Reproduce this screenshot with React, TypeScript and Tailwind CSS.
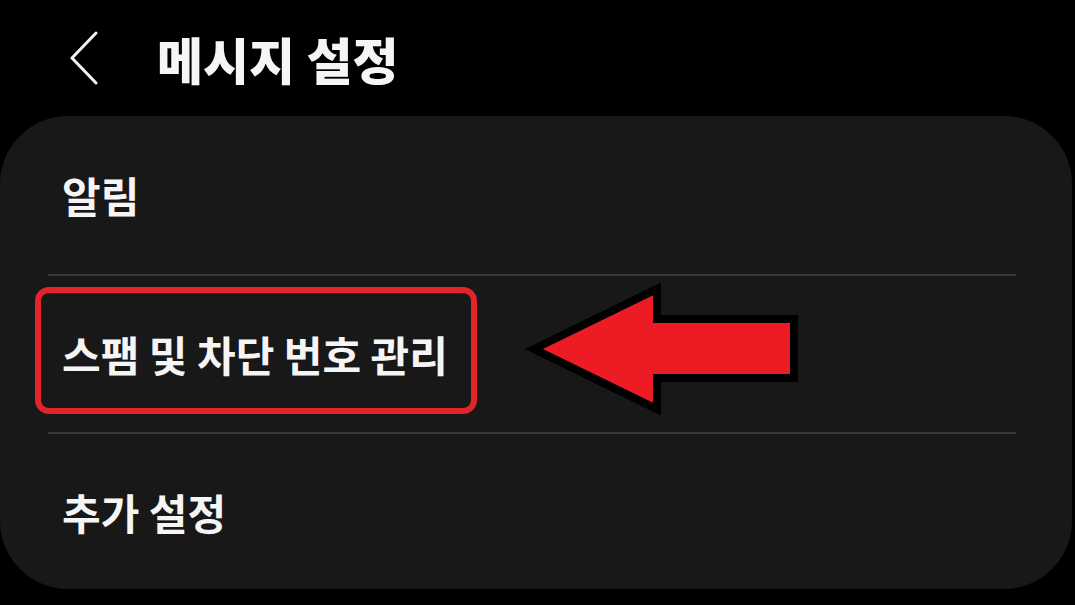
const font = { fontFamily: '"Noto Sans CJK KR", "Noto Sans", sans-serif' };

function BackChevron() {
  return (
    <svg width="32" height="54" viewBox="0 0 32 54" fill="none" aria-hidden>
      <path d="M28 2 L4 27 L28 52" stroke="#f2f2f2" strokeWidth="3" strokeLinecap="round" strokeLinejoin="round" />
    </svg>
  );
}

function Arrow() {
  return (
    <svg width="290" height="140" viewBox="0 0 290 140" aria-hidden>
      <polygon
        points="10,67 133,7 133,37 270,37 270,96 133,96 133,127"
        fill="#ed1c24"
        stroke="#000"
        strokeWidth="8"
        strokeLinejoin="miter"
      />
    </svg>
  );
}

const rows = ['알림', '스팸 및 차단 번호 관리', '추가 설정'];

export default function App() {
  return (
    <div className="relative w-[1075px] h-[605px] overflow-hidden bg-black text-[#f5f5f5]" style={font}>
      <div className="flex items-center h-[116px] pl-[68px]">
        <BackChevron />
        <h1 className="ml-[57px] text-[50px] font-extrabold leading-none">메시지 설정</h1>
      </div>

      <div className="relative mr-[3px] h-[473px] rounded-[68px] bg-[#181818] flex flex-col">
        {rows.map((label, i) => (
          <div key={label} className="flex flex-col">
            {i > 0 && <div className="ml-[48px] mr-[56px] h-[2px] bg-[#3a3a3a]" />}
            <div className={`flex items-center pl-[62px] ${i === 0 ? 'h-[158px]' : i === 1 ? 'h-[156px]' : 'h-[155px]'}`}>
              <span className="text-[42px] font-semibold leading-none">{label}</span>
            </div>
          </div>
        ))}

        <div className="absolute left-[35px] top-[171px] w-[442px] h-[127px] rounded-[14px] border-[6px] border-[#e3242b]" />
      </div>

      <div className="absolute left-[524px] top-[282px]">
        <Arrow />
      </div>
    </div>
  );
}
